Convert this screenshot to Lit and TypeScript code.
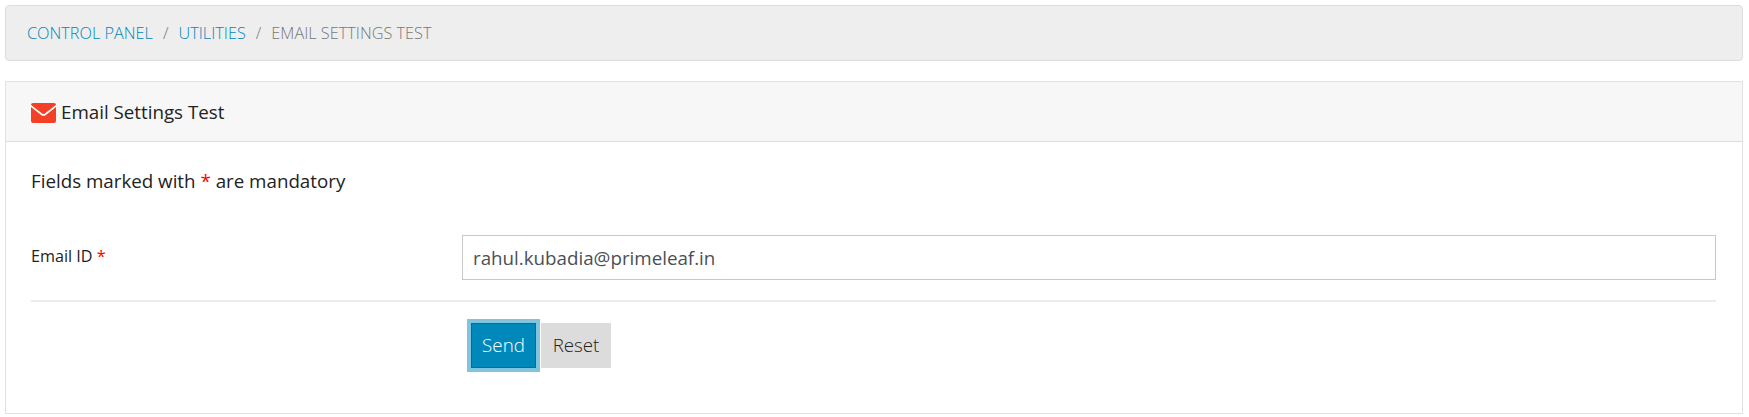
import { LitElement, html, css } from "lit";
import { customElement } from "lit/decorators.js";

@customElement("app-root")
export class AppRoot extends LitElement {
  static styles = css`
    :host {
      display: block;
      box-sizing: border-box;
      width: 1749px;
      height: 417px;
      padding: 5px 6px 0 5px;
      background: #fff;
      font-family: "Open Sans", "Liberation Sans", sans-serif;
      color: #222;
      overflow: hidden;
    }
    * { box-sizing: border-box; }
    .crumbs {
      height: 56px;
      display: flex;
      align-items: center;
      padding: 0 21px;
      background: #eee;
      border: 1px solid #dcdcdc;
      border-radius: 4px;
      font-size: 16.3px;
      font-weight: 300;
      text-transform: uppercase;
      color: #777;
    }
    .crumbs a { color: #0088bb; text-decoration: none; }
    .sep { margin: 0 10px; color: #777; }
    .panel {
      margin-top: 20px;
      height: 333px;
      border: 1px solid #e2e2e2;
      display: flex;
      flex-direction: column;
    }
    .head {
      height: 60px;
      flex: none;
      display: flex;
      align-items: center;
      gap: 5px;
      padding: 0 25px;
      background: #f7f7f7;
      border-bottom: 1px solid #dcdcdc;
      font-size: 18.75px;
      color: #222;
    }
    .head svg { display: block; flex: none; margin-top: 2px; }
    .body { padding: 25px 26px 0 25px; }
    .note { margin: 0; font-size: 18.75px; line-height: 28px; color: #222; }
    .req { color: #f00; }
    .row {
      display: grid;
      grid-template-columns: 431px 1fr;
      margin-top: 40px;
    }
    label { font-size: 16.2px; line-height: 20px; padding-top: 11px; color: #222; }
    .input {
      height: 45px;
      border: 1px solid #c8c8c8;
      display: flex;
      align-items: center;
      padding: 0 10px;
      font-size: 18.75px;
      color: #4a4f57;
    }
    hr { border: 0; border-top: 2px solid #ececec; margin: 20px 0 0; }
    .actions {
      display: flex;
      gap: 5px;
      margin: 21px 0 0 440px;
    }
    button {
      height: 45px;
      padding: 0 0 2px;
      border: 0;
      font: inherit;
      font-size: 18.75px;
      font-weight: 300;
      border-radius: 0;
    }
    .send {
      width: 65px;
      background: #0088bb;
      border: 1px solid #007099;
      color: #fff;
      box-shadow: 0 0 0 4px #80c4dd;
    }
    .reset { width: 70px; background: #dcdcdc; color: #222; }
  `;

  render() {
    return html`
      <nav class="crumbs">
        <a href="#">Control Panel</a><span class="sep">/</span>
        <a href="#">Utilities</a><span class="sep">/</span>
        <span>Email Settings Test</span>
      </nav>
      <section class="panel">
        <header class="head">
          <svg width="25" height="20" viewBox="0 0 25 20" aria-hidden="true">
            <rect width="25" height="20" rx="2" fill="#f44025"/>
            <path fill="none" stroke="#fff" stroke-width="1.7" d="M-0.5 2.6L10.6 11.2Q12.5 12.6 14.4 11.2L25.5 2.6"/>
          </svg>
          <span>Email Settings Test</span>
        </header>
        <div class="body">
          <p class="note">Fields marked with <span class="req">*</span> are mandatory</p>
          <div class="row">
            <label>Email ID <span class="req">*</span></label>
            <div class="input">rahul.kubadia@primeleaf.in</div>
          </div>
          <hr />
          <div class="actions">
            <button class="send">Send</button>
            <button class="reset">Reset</button>
          </div>
        </div>
      </section>
    `;
  }
}
